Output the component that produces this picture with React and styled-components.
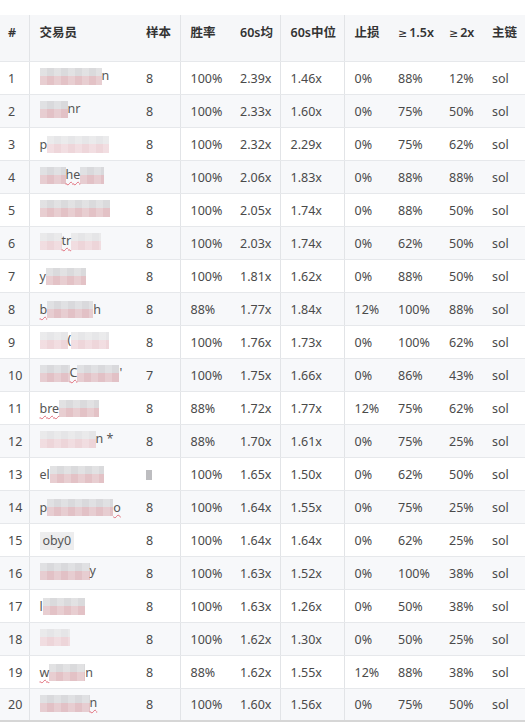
import React from "react";
import styled, { createGlobalStyle, css } from "styled-components";

const Global = createGlobalStyle`
  html, body { margin: 0; padding: 0; background: #fff; }
  body {
    font-family: "Noto Sans", "DejaVu Sans", "Noto Sans CJK SC", sans-serif;
    -webkit-font-smoothing: antialiased;
  }
`;

const Wrap = styled.div`
  width: 525px;
  padding-top: 15px;
`;

const Table = styled.table`
  width: 525px;
  border-collapse: collapse;
  table-layout: fixed;
  font-size: 12.5px;
  color: #4a4a4a;
  border-bottom: 2px solid #d6d6d6;
`;

const Head = styled.thead`
  background: #f6f7f9;
`;

const Th = styled.th`
  height: 46px;
  box-sizing: border-box;
  padding: 9px 0 0 ${(p) => (p.$first ? 8 : 10)}px;
  text-align: left;
  vertical-align: top;
  font-weight: 600;
  color: #333;
  white-space: nowrap;
  line-height: 18px;
  border-bottom: 1px solid #e6e8eb;
  ${(p) => p.$line && css`border-right: 1px solid #e2e4e7;`}
`;

const Sym = styled.span`
  font-family: "DejaVu Sans", sans-serif;
  font-weight: 400;
  font-size: 11px;
  margin-right: 2px;
`;

const Tr = styled.tr`
  background: ${(p) => (p.$alt ? "#f7f8fa" : "#fff")};
`;

const Td = styled.td`
  height: 33px;
  box-sizing: border-box;
  padding: 2px 0 0 ${(p) => (p.$first ? 8 : 10)}px;
  vertical-align: middle;
  white-space: nowrap;
  overflow: visible;
  line-height: 18px;
  border-bottom: 1px solid #e6e8eb;
  ${(p) => p.$line && css`border-right: 1px solid #e2e4e7;`}
`;

const NameBox = styled.span`
  display: inline-flex;
  align-items: center;
  color: #555;
`;

const Frag = styled.span`
  position: relative;
  z-index: 1;
  ${(p) =>
    p.$wavy &&
    css`
      text-decoration: underline wavy #e06a78;
      text-decoration-thickness: 1px;
      text-underline-offset: 2px;
    `}
  ${(p) =>
    p.$boxed &&
    css`
      background: #ededee;
      padding: 0 3px;
    `}
`;

const Mosaic = styled.span`
  display: inline-block;
  height: 17px;
  background:
    repeating-linear-gradient(
      to right,
      rgba(255, 255, 255, 0.2) 0 7px,
      rgba(255, 255, 255, 0) 7px 14px
    ),
    linear-gradient(
      to bottom,
      ${(p) => (p.$light ? "#e2e2e4" : "#d4d4d7")} 0 48%,
      ${(p) => (p.$light ? "#ecd0d4" : "#dfb8bd")} 48% 100%
    );
  opacity: 0.85;
  filter: blur(0.6px);
`;

const Hidden = styled.span`
  display: inline-block;
  width: 6px;
  height: 10px;
  background: #bdbdc0;
  vertical-align: middle;
`;

const cols = [29, 107, 44, 50, 50, 64, 44, 51, 43, 43];
const heads = ["#", "交易员", "样本", "胜率", "60s均", "60s中位", "止损", ["≥", "1.5x"], ["≥", "2x"], "主链"];
const lines = [true, false, true, false, true, true, false, false, false, false];

// name segments: string = visible text, [n] = mosaic width, {t} = wavy-underlined text
const rows = [
  [1, [[62], "n"], 8, "100%", "2.39x", "1.46x", "0%", "88%", "12%"],
  [2, [[28], "nr"], 8, "100%", "2.33x", "1.60x", "0%", "75%", "50%"],
  [3, ["p", [62]], 8, "100%", "2.32x", "2.29x", "0%", "75%", "62%"],
  [4, [[26], { t: "he" }, [24]], 8, "100%", "2.06x", "1.83x", "0%", "88%", "88%"],
  [5, [[70]], 8, "100%", "2.05x", "1.74x", "0%", "88%", "50%"],
  [6, [[22], { t: "tr" }, [30]], 8, "100%", "2.03x", "1.74x", "0%", "62%", "50%"],
  [7, ["y", [40]], 8, "100%", "1.81x", "1.62x", "0%", "88%", "50%"],
  [8, [{ t: "b" }, [46], "h"], 8, "88%", "1.77x", "1.84x", "12%", "100%", "88%"],
  [9, [[28], "(", [38]], 8, "100%", "1.76x", "1.73x", "0%", "100%", "62%"],
  [10, [[30], { t: "C" }, [42], "'"], 7, "100%", "1.75x", "1.66x", "0%", "86%", "43%"],
  [11, [{ t: "bre" }, [40]], 8, "88%", "1.72x", "1.77x", "12%", "75%", "62%"],
  [12, [[56], "n *"], 8, "88%", "1.70x", "1.61x", "0%", "75%", "25%"],
  [13, ["el", [54]], null, "100%", "1.65x", "1.50x", "0%", "62%", "50%"],
  [14, ["p", [66], { t: "o" }], 8, "100%", "1.64x", "1.55x", "0%", "75%", "25%"],
  [15, [{ b: "oby0" }], 8, "100%", "1.64x", "1.64x", "0%", "62%", "25%"],
  [16, [[50], "y"], 8, "100%", "1.63x", "1.52x", "0%", "100%", "38%"],
  [17, ["l", [42]], 8, "100%", "1.63x", "1.26x", "0%", "50%", "38%"],
  [18, [[30]], 8, "100%", "1.62x", "1.30x", "0%", "50%", "25%"],
  [19, [{ t: "w" }, [36], "n"], 8, "88%", "1.62x", "1.55x", "12%", "88%", "38%"],
  [20, [[50], { t: "n" }], 8, "100%", "1.60x", "1.56x", "0%", "75%", "50%"],
];

function Name({ parts, idx }) {
  return (
    <NameBox>
      {parts.map((p, i) => {
        if (typeof p === "string") return <Frag key={i}>{p}</Frag>;
        if (Array.isArray(p))
          return <Mosaic key={i} $light={idx % 3 === 2} style={{ width: p[0] + "px" }} />;
        if (p.b)
          return (
            <Frag key={i} $boxed>
              {p.b}
            </Frag>
          );
        return (
          <Frag key={i} $wavy>
            {p.t}
          </Frag>
        );
      })}
    </NameBox>
  );
}

export default function App() {
  return (
    <>
      <Global />
      <Wrap>
        <Table>
          <colgroup>
            {cols.map((w, i) => (
              <col key={i} style={{ width: w + "px" }} />
            ))}
          </colgroup>
          <Head>
            <tr>
              {heads.map((h, i) => (
                <Th key={i} $first={i === 0} $line={lines[i]}>
                  {Array.isArray(h) ? (
                    <>
                      <Sym>{h[0]}</Sym>
                      {h[1]}
                    </>
                  ) : (
                    h
                  )}
                </Th>
              ))}
            </tr>
          </Head>
          <tbody>
            {rows.map((r, ri) => (
              <Tr key={r[0]} $alt={ri % 2 === 1}>
                <Td $first $line>{r[0]}</Td>
                <Td>
                  <Name parts={r[1]} idx={ri} />
                </Td>
                <Td $line>{r[2] === null ? <Hidden /> : r[2]}</Td>
                <Td>{r[3]}</Td>
                <Td $line>{r[4]}</Td>
                <Td $line>{r[5]}</Td>
                <Td>{r[6]}</Td>
                <Td>{r[7]}</Td>
                <Td>{r[8]}</Td>
                <Td>sol</Td>
              </Tr>
            ))}
          </tbody>
        </Table>
      </Wrap>
    </>
  );
}
